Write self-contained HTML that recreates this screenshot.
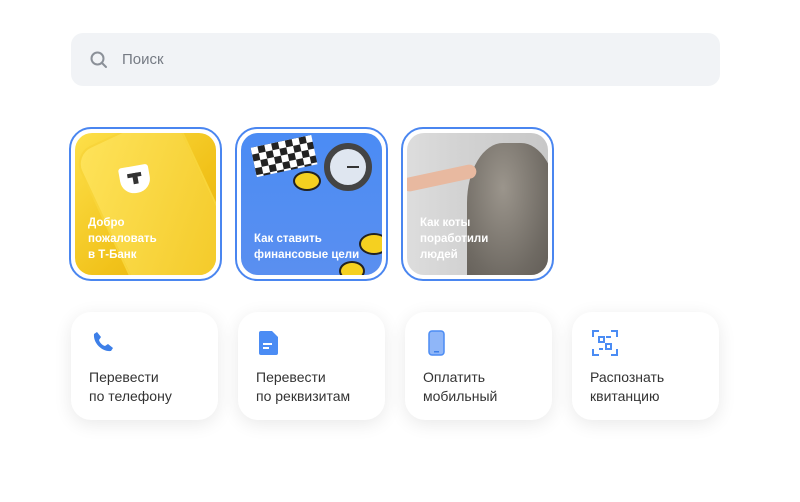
<!DOCTYPE html>
<html><head><meta charset="utf-8"><style>
*{box-sizing:border-box;margin:0;padding:0}
body{width:800px;height:502px;background:#fff;font-family:"Liberation Sans",sans-serif;position:relative;overflow:hidden}
.search{position:absolute;left:71px;top:33px;width:649px;height:53px;background:#f1f3f6;border-radius:12px}
.search span{position:absolute;left:51px;top:18px;font-size:15px;color:#767b84}
.search svg{position:absolute;left:18px;top:17px}
.story{position:absolute;top:127px;width:153px;height:154px;border:2px solid #4a86f0;border-radius:22px;padding:4px}
.story .in{width:100%;height:100%;border-radius:17px;overflow:hidden;position:relative}
.story .t{position:absolute;left:13px;bottom:12px;color:#fff;font-weight:bold;font-size:11.5px;line-height:16px}
.card{position:absolute;top:312px;width:147px;height:108px;border-radius:20px;background:#fff;box-shadow:0 4px 18px rgba(0,0,0,.09)}
.card .t{position:absolute;left:18px;top:56px;font-size:14px;line-height:19px;color:#333}
.card svg{position:absolute;left:20px;top:18px}
</style></head><body>
<div class="search"><svg width="20" height="20" viewBox="0 0 20 20"><circle cx="8.5" cy="8.5" r="6" fill="none" stroke="#8b9098" stroke-width="2"/><path d="M13 13l4 4" stroke="#8b9098" stroke-width="2" stroke-linecap="round"/></svg><span>Поиск</span></div>

<div class="story" style="left:69px"><div class="in" style="background:linear-gradient(135deg,#fde04a,#f1c21a 60%,#e5b10e)">
<div style="position:absolute;left:28px;top:-10px;width:110px;height:170px;border:2px solid #f8d53a;border-radius:20px;transform:rotate(-25deg);background:linear-gradient(135deg,#fee35a,#f3c825)"></div>
<div style="position:absolute;left:45px;top:33px;width:30px;height:27px;background:#fff;border-radius:3px 3px 14px 14px;transform:rotate(-10deg)"><div style="position:absolute;left:8px;top:7px;width:14px;height:4px;background:#333"></div><div style="position:absolute;left:13px;top:7px;width:5px;height:11px;background:#333"></div></div>
<div class="t">Добро<br>пожаловать<br>в Т-Банк</div></div></div>

<div class="story" style="left:235px"><div class="in" style="background:linear-gradient(#4b8cf4,#5a8ff0)">
<div style="position:absolute;left:12px;top:8px;width:62px;height:30px;background:repeating-conic-gradient(#222 0 25%,#fff 0 50%) 0 0/14px 14px;transform:rotate(-12deg)"></div>
<div style="position:absolute;left:83px;top:10px;width:48px;height:48px;border-radius:50%;background:#dfe6f0;border:6px solid #444"><div style="position:absolute;left:17px;top:17px;width:12px;height:2px;background:#333"></div></div>
<div style="position:absolute;left:52px;top:38px;width:28px;height:20px;border-radius:50%;background:#f5d020;border:2px solid #222"></div>
<div style="position:absolute;left:118px;top:100px;width:30px;height:22px;border-radius:50%;background:#f5d020;border:2px solid #222"></div>
<div style="position:absolute;left:98px;top:128px;width:26px;height:20px;border-radius:50%;background:#f5d020;border:2px solid #222"></div>
<div class="t">Как ставить<br>финансовые цели</div></div></div>

<div class="story" style="left:401px"><div class="in" style="background:linear-gradient(90deg,#ddd 0,#d2d2d2 40%,#c8c8c8 100%)">
<div style="position:absolute;left:60px;top:10px;width:90px;height:150px;background:radial-gradient(ellipse at 40% 30%,#9b958c,#6f6a63 60%,#5a554f);border-radius:40% 40% 10% 10%"></div>
<div style="position:absolute;left:-5px;top:38px;width:75px;height:14px;background:#e8b9a0;border-radius:8px;transform:rotate(-12deg)"></div>
<div class="t">Как коты<br>поработили<br>людей</div></div></div>

<div class="card" style="left:71px"><svg width="24" height="24" viewBox="0 0 24 24"><path d="M6 2l4 5-2 3c1 3 3 5 6 6l3-2 5 4-2 3c-9 1-18-8-17-17z" fill="#3d7fe8"/></svg><div class="t">Перевести<br>по телефону</div></div>
<div class="card" style="left:238px"><svg width="24" height="26" viewBox="0 0 24 26"><path d="M3 1h11l6 6v16a2 2 0 0 1-2 2H3a2 2 0 0 1-2-2V3a2 2 0 0 1 2-2z" fill="#4b8cf4"/><rect x="5" y="13" width="9" height="2" fill="#fff"/><rect x="5" y="17" width="6" height="2" fill="#fff"/></svg><div class="t">Перевести<br>по реквизитам</div></div>
<div class="card" style="left:405px"><svg width="24" height="26" viewBox="0 0 24 26"><rect x="4" y="1" width="15" height="24" rx="3" fill="#8fb6f8"/><rect x="4" y="1" width="15" height="24" rx="3" fill="none" stroke="#4b8cf4" stroke-width="1.5"/><rect x="9" y="21" width="5" height="1.5" fill="#3d7fe8"/></svg><div class="t">Оплатить<br>мобильный</div></div>
<div class="card" style="left:572px"><svg width="26" height="26" viewBox="0 0 26 26" fill="none" stroke="#4b8cf4" stroke-width="2"><path d="M1 7V1h6M19 1h6v6M25 19v6h-6M7 25H1v-6"/><rect x="7" y="7" width="5" height="5"/><rect x="14" y="14" width="5" height="5"/><path d="M14 7h5M7 19h4"/></svg><div class="t">Распознать<br>квитанцию</div></div>
</body></html>
